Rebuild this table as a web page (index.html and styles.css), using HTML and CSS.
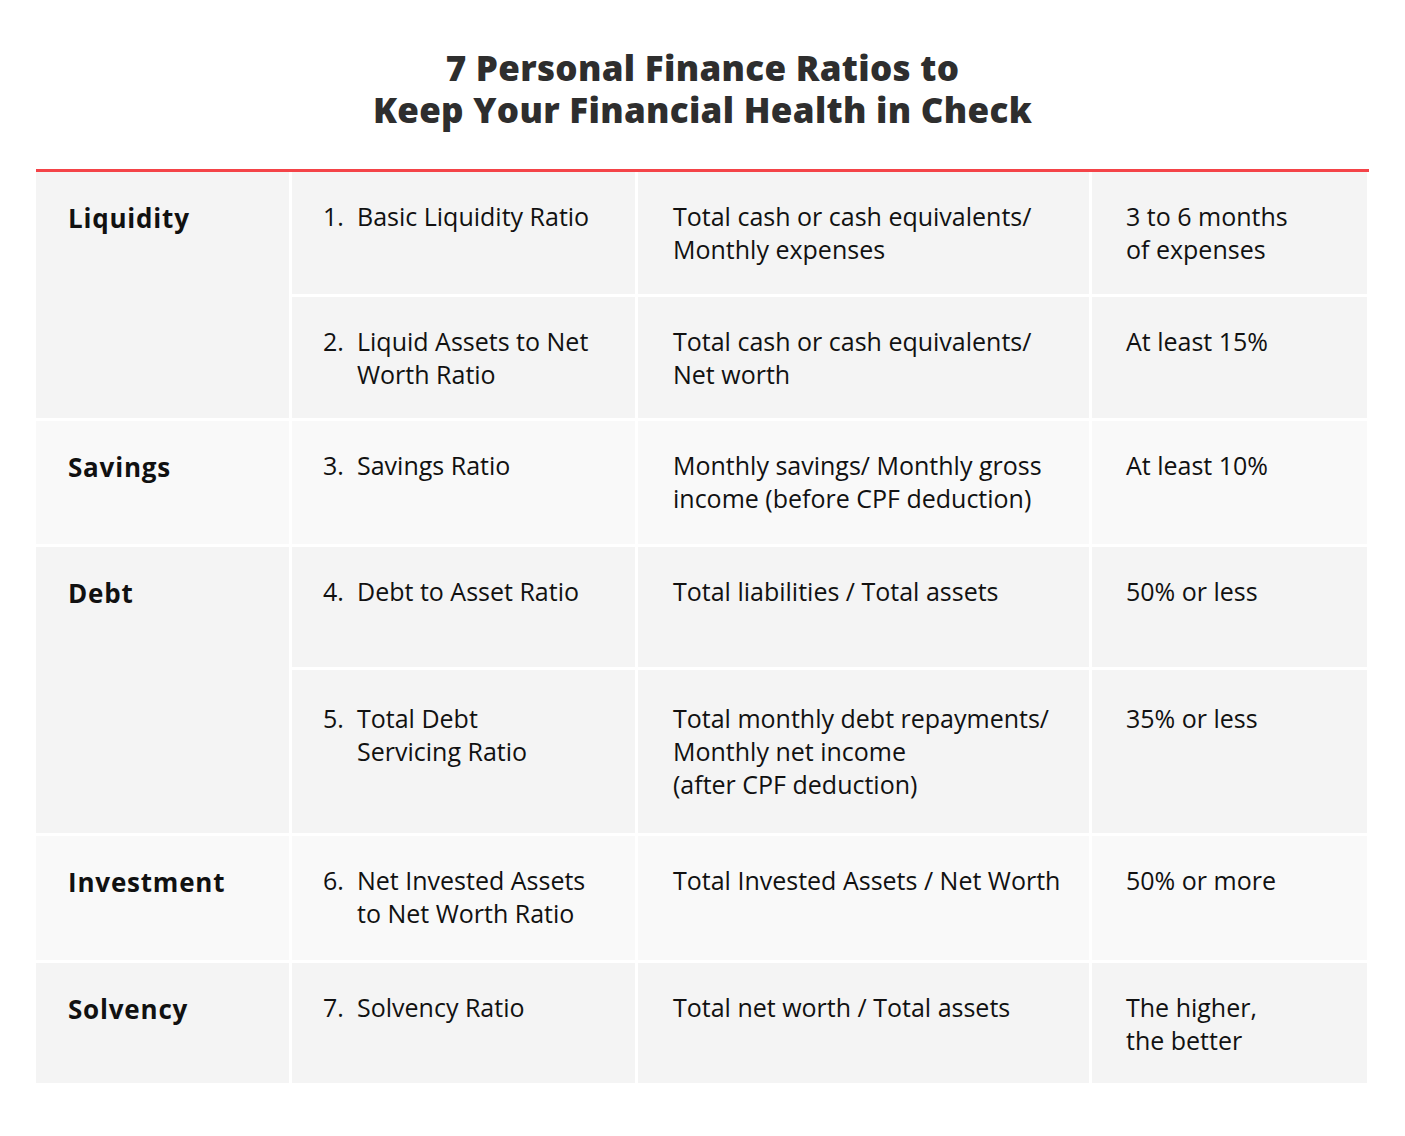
FILE: index.html
```html
<!DOCTYPE html>
<html>
<head>
<meta charset="utf-8">
<link rel="stylesheet" href="styles.css">
</head>
<body>
<h1 class="title"><span class="tline">7 Personal Finance Ratios to</span><span class="tline">Keep Your Financial Health in Check</span></h1>
<div class="wrap">
  <div class="table">
    <div class="cell cat c-a r-12">Liquidity</div>
    <div class="cell item c-a"><span class="num">1.</span><span>Basic Liquidity Ratio</span></div>
    <div class="cell c-a">Total cash or cash equivalents/<br>Monthly expenses</div>
    <div class="cell val c-a">3 to 6 months<br>of expenses</div>

    <div class="cell item c-a"><span class="num">2.</span><span>Liquid Assets to Net<br>Worth Ratio</span></div>
    <div class="cell c-a">Total cash or cash equivalents/<br>Net worth</div>
    <div class="cell val c-a">At least 15%</div>

    <div class="cell cat c-b">Savings</div>
    <div class="cell item c-b"><span class="num">3.</span><span>Savings Ratio</span></div>
    <div class="cell c-b">Monthly savings/ Monthly gross<br>income (before CPF deduction)</div>
    <div class="cell val c-b">At least 10%</div>

    <div class="cell cat c-a r-45">Debt</div>
    <div class="cell item c-a"><span class="num">4.</span><span>Debt to Asset Ratio</span></div>
    <div class="cell c-a">Total liabilities / Total assets</div>
    <div class="cell val c-a">50% or less</div>

    <div class="cell item c-a five"><span class="num">5.</span><span>Total Debt<br>Servicing Ratio</span></div>
    <div class="cell c-a five">Total monthly debt repayments/<br>Monthly net income<br>(after CPF deduction)</div>
    <div class="cell val c-a five">35% or less</div>

    <div class="cell cat c-b">Investment</div>
    <div class="cell item c-b"><span class="num">6.</span><span>Net Invested Assets<br>to Net Worth Ratio</span></div>
    <div class="cell c-b">Total Invested Assets / Net Worth</div>
    <div class="cell val c-b">50% or more</div>

    <div class="cell cat c-a">Solvency</div>
    <div class="cell item c-a"><span class="num">7.</span><span>Solvency Ratio</span></div>
    <div class="cell c-a">Total net worth / Total assets</div>
    <div class="cell val c-a">The higher,<br>the better</div>
  </div>
</div>
</body>
</html>
```
FILE: styles.css
```css
html, body {
  margin: 0;
  padding: 0;
  background: #fff;
}
body {
  font-family: "Open Sans", "Lato", sans-serif;
  color: #111;
}
.title {
  margin: 0;
  padding-top: 47px;
  font-family: "Open Sans", sans-serif;
  font-weight: 800;
  font-size: 35px;
  line-height: 42px;
  color: #2e2e2e;
  text-align: center;
  letter-spacing: 0.3px;
}
.tline {
  display: block;
}
.wrap {
  margin: 38px 0 0 36px;
  width: 1333px;
  border-top: 3px solid #f44348;
}
.table {
  display: grid;
  grid-template-columns: 253px 343px 451px 275px;
  grid-template-rows: 122px 121px 123px 120px 163px 124px 120px;
  gap: 3px;
  width: 1331px;
  background: #fff;
}
.cell {
  padding: 28px 8px 0 35px;
  font-size: 25px;
  line-height: 33px;
}
.five {
  padding-top: 32px;
}
.c-a { background: #f4f4f4; }
.c-b { background: #f9f9f9; }
.cat {
  padding-left: 32px;
  padding-top: 30px;
  font-weight: 700;
  font-size: 26px;
  letter-spacing: 0.8px;
}
.r-12 { grid-row: span 2; }
.r-45 { grid-row: span 2; }
.item {
  display: flex;
  padding-left: 31px;
}
.num {
  width: 34px;
  flex: none;
}
.val {
  padding-left: 34px;
}
```
